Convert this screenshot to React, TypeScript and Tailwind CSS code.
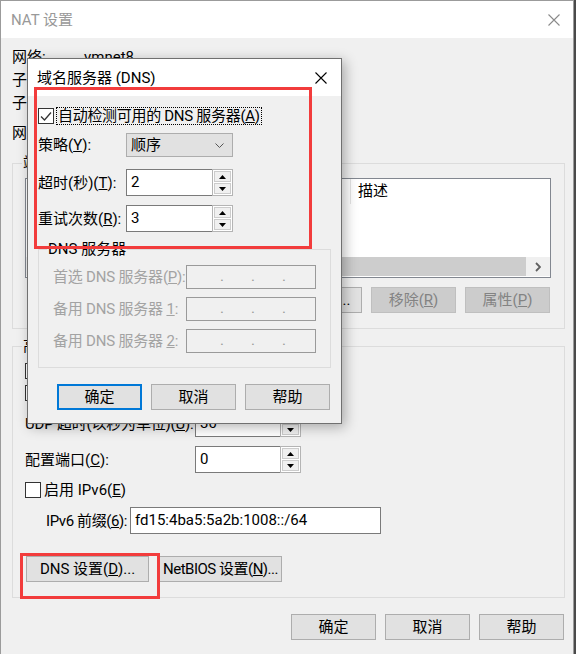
import React from "react";

function CloseIcon({ color }: { color: string }) {
  return (
    <svg width="12" height="12" viewBox="0 0 12 12">
      <path d="M0.5 0.5 L11.5 11.5 M11.5 0.5 L0.5 11.5" stroke={color} strokeWidth="1.1" fill="none" />
    </svg>
  );
}

function CheckBox({ checked }: { checked?: boolean }) {
  return (
    <div className="flex h-[16px] w-[16px] shrink-0 items-center justify-center border border-[#333333] bg-white">
      {checked && (
        <svg width="14" height="14" viewBox="0 0 14 14">
          <polyline points="2,7.5 5.5,11 12,3.5" stroke="#333333" strokeWidth="1.3" fill="none" />
        </svg>
      )}
    </div>
  );
}

function Btn({
  children,
  className = "w-[85px]",
  disabled,
  focused,
}: {
  children: React.ReactNode;
  className?: string;
  disabled?: boolean;
  focused?: boolean;
}) {
  return (
    <div
      className={`flex h-[26px] shrink-0 items-center justify-center whitespace-nowrap ${className} ${
        focused
          ? "border-2 border-[#0078d7] bg-[#e1e1e1]"
          : disabled
          ? "border border-[#bfbfbf] bg-[#cccccc] text-[#838383]"
          : "border border-[#adadad] bg-[#e1e1e1]"
      }`}
    >
      {children}
    </div>
  );
}

function Arrow({ up }: { up?: boolean }) {
  return (
    <svg width="7" height="4" viewBox="0 0 7 4">
      <polygon points={up ? "0,4 7,4 3.5,0" : "0,0 7,0 3.5,4"} fill="#000000" />
    </svg>
  );
}

function SpinBox({ value, className = "w-[106px]" }: { value: string; className?: string }) {
  return (
    <div className={`flex h-[27px] shrink-0 ${className}`}>
      <div className="flex-1 border border-r-0 border-[#7a7a7a] bg-white pl-[4px] leading-[25px]">{value}</div>
      <div className="flex w-[21px] flex-col gap-[1px] border border-[#b4b4b4] bg-white p-[1px]">
        <div className="flex flex-1 items-center justify-center border border-[#cccccc] bg-[#f0f0f0]">
          <Arrow up />
        </div>
        <div className="flex flex-1 items-center justify-center border border-[#cccccc] bg-[#f0f0f0]">
          <Arrow />
        </div>
      </div>
    </div>
  );
}

function IpBox() {
  return (
    <div className="flex h-[24px] w-[130px] shrink-0 border border-[#9a9a9a] bg-[#f0f0f0] pl-[6px] leading-[20px] text-[#9a9a9a]">
      <span className="w-[31px] text-right">.</span>
      <span className="w-[31px] text-right">.</span>
      <span className="w-[31px] text-right">.</span>
    </div>
  );
}

export default function App() {
  return (
    <div className="relative h-[654px] w-[576px] overflow-hidden bg-[#4a4a4a] text-[15px] leading-[20px] text-black font-[family-name:Roboto,'Noto_Sans_CJK_SC',sans-serif]">
      {/* NAT 设置 window */}
      <div className="flex h-[654px] w-[574px] flex-col border border-b-0 border-[#9b9b9b] bg-[#f0f0f0]">
        <div className="flex h-[37px] shrink-0 items-center justify-between bg-white pl-[10px] pr-[13px]">
          <span className="text-[#999999]">NAT 设置</span>
          <CloseIcon color="#8a8a8a" />
        </div>

        <div className="flex flex-col pl-[11px]">
          <div className="mt-[7px] flex h-[23px] items-center">
            <span className="w-[72px]">网络:</span>
            <span>vmnet8</span>
          </div>
          <div className="flex h-[23px] items-center">
            <span className="w-[72px]">子网 IP:</span>
            <span>192.168.47.0</span>
          </div>
          <div className="flex h-[23px] items-center">
            <span className="w-[72px]">子网掩码:</span>
            <span>255.255.255.0</span>
          </div>
          <div className="mt-[6px] flex h-[26px] items-center">
            <span>网关 IP(G):</span>
          </div>

          {/* 端口转发 */}
          <div className="relative mt-[17px] flex h-[166px] w-[553px] flex-col border border-[#dcdcdc] pl-[12px] pr-[14px] pt-[14px]">
            <span className="absolute left-[9px] top-[-11px] bg-[#f0f0f0] px-[1px]">端口转发(F)</span>
            <div className="flex h-[100px] w-[526px] flex-col border border-[#828790] bg-white">
              <div className="flex h-[25px] shrink-0">
                <div className="w-[90px] border-r border-[#e5e5e5] pl-[7px] leading-[24px]">主机端口</div>
                <div className="w-[70px] border-r border-[#e5e5e5] pl-[7px] leading-[24px]">类型</div>
                <div className="w-[165px] border-r border-[#e5e5e5] pl-[7px] leading-[24px]">虚拟机 IP 地址</div>
                <div className="pl-[7px] leading-[24px]">描述</div>
              </div>
              <div className="flex-1" />
              <div className="mb-[1px] flex h-[19px] shrink-0 bg-[#f0f0f0]">
                <div className="w-[24px]" />
                <div className="flex-1 bg-[#cdcdcd]" />
                <div className="flex w-[24px] items-center justify-center">
                  <svg width="6" height="10" viewBox="0 0 6 10">
                    <polyline points="1,1 5,5 1,9" stroke="#606060" strokeWidth="1.8" fill="none" />
                  </svg>
                </div>
              </div>
            </div>
            <div className="mt-[9px] flex justify-end gap-[9px]">
              <Btn>添加(<u>A</u>)...</Btn>
              <Btn disabled>移除(<u>R</u>)</Btn>
              <Btn disabled>属性(<u>P</u>)</Btn>
            </div>
          </div>

          {/* 高级 */}
          <div className="relative mt-[17px] flex h-[252px] w-[553px] flex-col border border-[#dcdcdc] pl-[12px] pt-[16px]">
            <span className="absolute left-[9px] top-[-11px] bg-[#f0f0f0] px-[1px]">高级</span>
            <div className="flex h-[16px] items-center gap-[3px]">
              <CheckBox />
              <span>允许活动的 FTP(<u>T</u>)</span>
            </div>
            <div className="mt-[6px] flex h-[16px] items-center gap-[3px]">
              <CheckBox />
              <span>允许任何组织唯一标识符(<u>O</u>)</span>
            </div>
            <div className="mt-[9px] flex h-[27px] items-center">
              <span className="w-[170px] whitespace-nowrap tracking-[-0.2px]">
                UDP 超时(以秒为单位)(<u>U</u>):
              </span>
              <SpinBox value="30" />
            </div>
            <div className="mt-[9px] flex h-[27px] items-center">
              <span className="w-[170px]">
                配置端口(<u>C</u>):
              </span>
              <SpinBox value="0" />
            </div>
            <div className="mt-[9px] flex h-[16px] items-center gap-[3px]">
              <CheckBox />
              <span>
                启用 IPv6(<u>E</u>)
              </span>
            </div>
            <div className="mt-[9px] flex h-[27px] items-center pl-[21px]">
              <span className="w-[84px] shrink-0 whitespace-nowrap tracking-[-0.4px]">
                IPv6 前缀(<u>6</u>):
              </span>
              <div className="h-[27px] w-[251px] border border-[#7a7a7a] bg-white pl-[4px] leading-[25px]">
                fd15:4ba5:5a2b:1008::/64
              </div>
            </div>
            <div className="ml-[1px] mt-[22px] flex gap-[10px]">
              <Btn className="w-[123px]">
                DNS 设置(<u>D</u>)...
              </Btn>
              <Btn className="w-[123px] tracking-[-0.5px]">
                NetBIOS 设置(<u>N</u>)...
              </Btn>
            </div>
          </div>

          <div className="mt-[16px] flex w-[552px] justify-end gap-[9px]">
            <Btn>确定</Btn>
            <Btn>取消</Btn>
            <Btn>帮助</Btn>
          </div>
        </div>
      </div>

      {/* 域名服务器 (DNS) dialog */}
      <div className="absolute left-[27px] top-[58px] flex h-[366px] w-[315px] flex-col border border-[#707070] bg-[#f0f0f0] shadow-[3px_3px_12px_rgba(0,0,0,0.3)]">
        <div className="flex h-[37px] shrink-0 items-center justify-between bg-white pl-[9px] pr-[14px]">
          <span>域名服务器 (DNS)</span>
          <CloseIcon color="#000000" />
        </div>
        <div className="flex flex-col px-[10px] pt-[11px]">
          <div className="flex h-[18px] items-center gap-[2px]">
            <CheckBox checked />
            <span className="h-[18px] whitespace-nowrap border border-dotted border-black px-[1px] leading-[16px] tracking-[-0.3px]">
              自动检测可用的 DNS 服务器(<u>A</u>)
            </span>
          </div>
          <div className="mt-[8px] flex h-[24px] items-center">
            <span className="w-[88px]">
              策略(<u>Y</u>):
            </span>
            <div className="flex h-[24px] w-[107px] items-center justify-between border border-[#adadad] bg-[#e1e1e1] pl-[4px] pr-[8px]">
              <span>顺序</span>
              <svg width="9" height="5" viewBox="0 0 9 5">
                <polyline points="0.5,0.5 4.5,4.5 8.5,0.5" stroke="#555555" strokeWidth="1" fill="none" />
              </svg>
            </div>
          </div>
          <div className="mt-[12px] flex h-[27px] items-center">
            <span className="w-[88px]">
              超时(秒)(<u>T</u>):
            </span>
            <SpinBox value="2" className="w-[107px]" />
          </div>
          <div className="mt-[9px] flex h-[27px] items-center">
            <span className="w-[88px]">
              重试次数(<u>R</u>):
            </span>
            <SpinBox value="3" className="w-[107px]" />
          </div>

          <div className="relative mt-[17px] flex h-[119px] w-[293px] flex-col gap-[8px] border border-[#dcdcdc] pl-[14px] pt-[15px] text-[#a3a3a3]">
            <span className="absolute left-[8px] top-[-11px] bg-[#f0f0f0] px-[1px] text-black">DNS 服务器</span>
            <div className="flex h-[24px] items-center">
              <span className="w-[133px] whitespace-nowrap tracking-[-0.2px]">
                首选 DNS 服务器(<u>P</u>):
              </span>
              <IpBox />
            </div>
            <div className="flex h-[24px] items-center">
              <span className="w-[133px] whitespace-nowrap tracking-[-0.2px]">
                备用 DNS 服务器 <u>1</u>:
              </span>
              <IpBox />
            </div>
            <div className="flex h-[24px] items-center">
              <span className="w-[133px] whitespace-nowrap tracking-[-0.2px]">
                备用 DNS 服务器 <u>2</u>:
              </span>
              <IpBox />
            </div>
          </div>

          <div className="ml-[19px] mt-[16px] flex gap-[9px]">
            <Btn focused>确定</Btn>
            <Btn>取消</Btn>
            <Btn>帮助</Btn>
          </div>
        </div>
      </div>

      {/* annotations */}
      <div className="pointer-events-none absolute left-[34px] top-[87px] h-[162px] w-[278px] border-[3px] border-[#f23c3c]" />
      <div className="pointer-events-none absolute left-[20px] top-[553px] h-[46px] w-[140px] border-[3px] border-[#f23c3c]" />
    </div>
  );
}
